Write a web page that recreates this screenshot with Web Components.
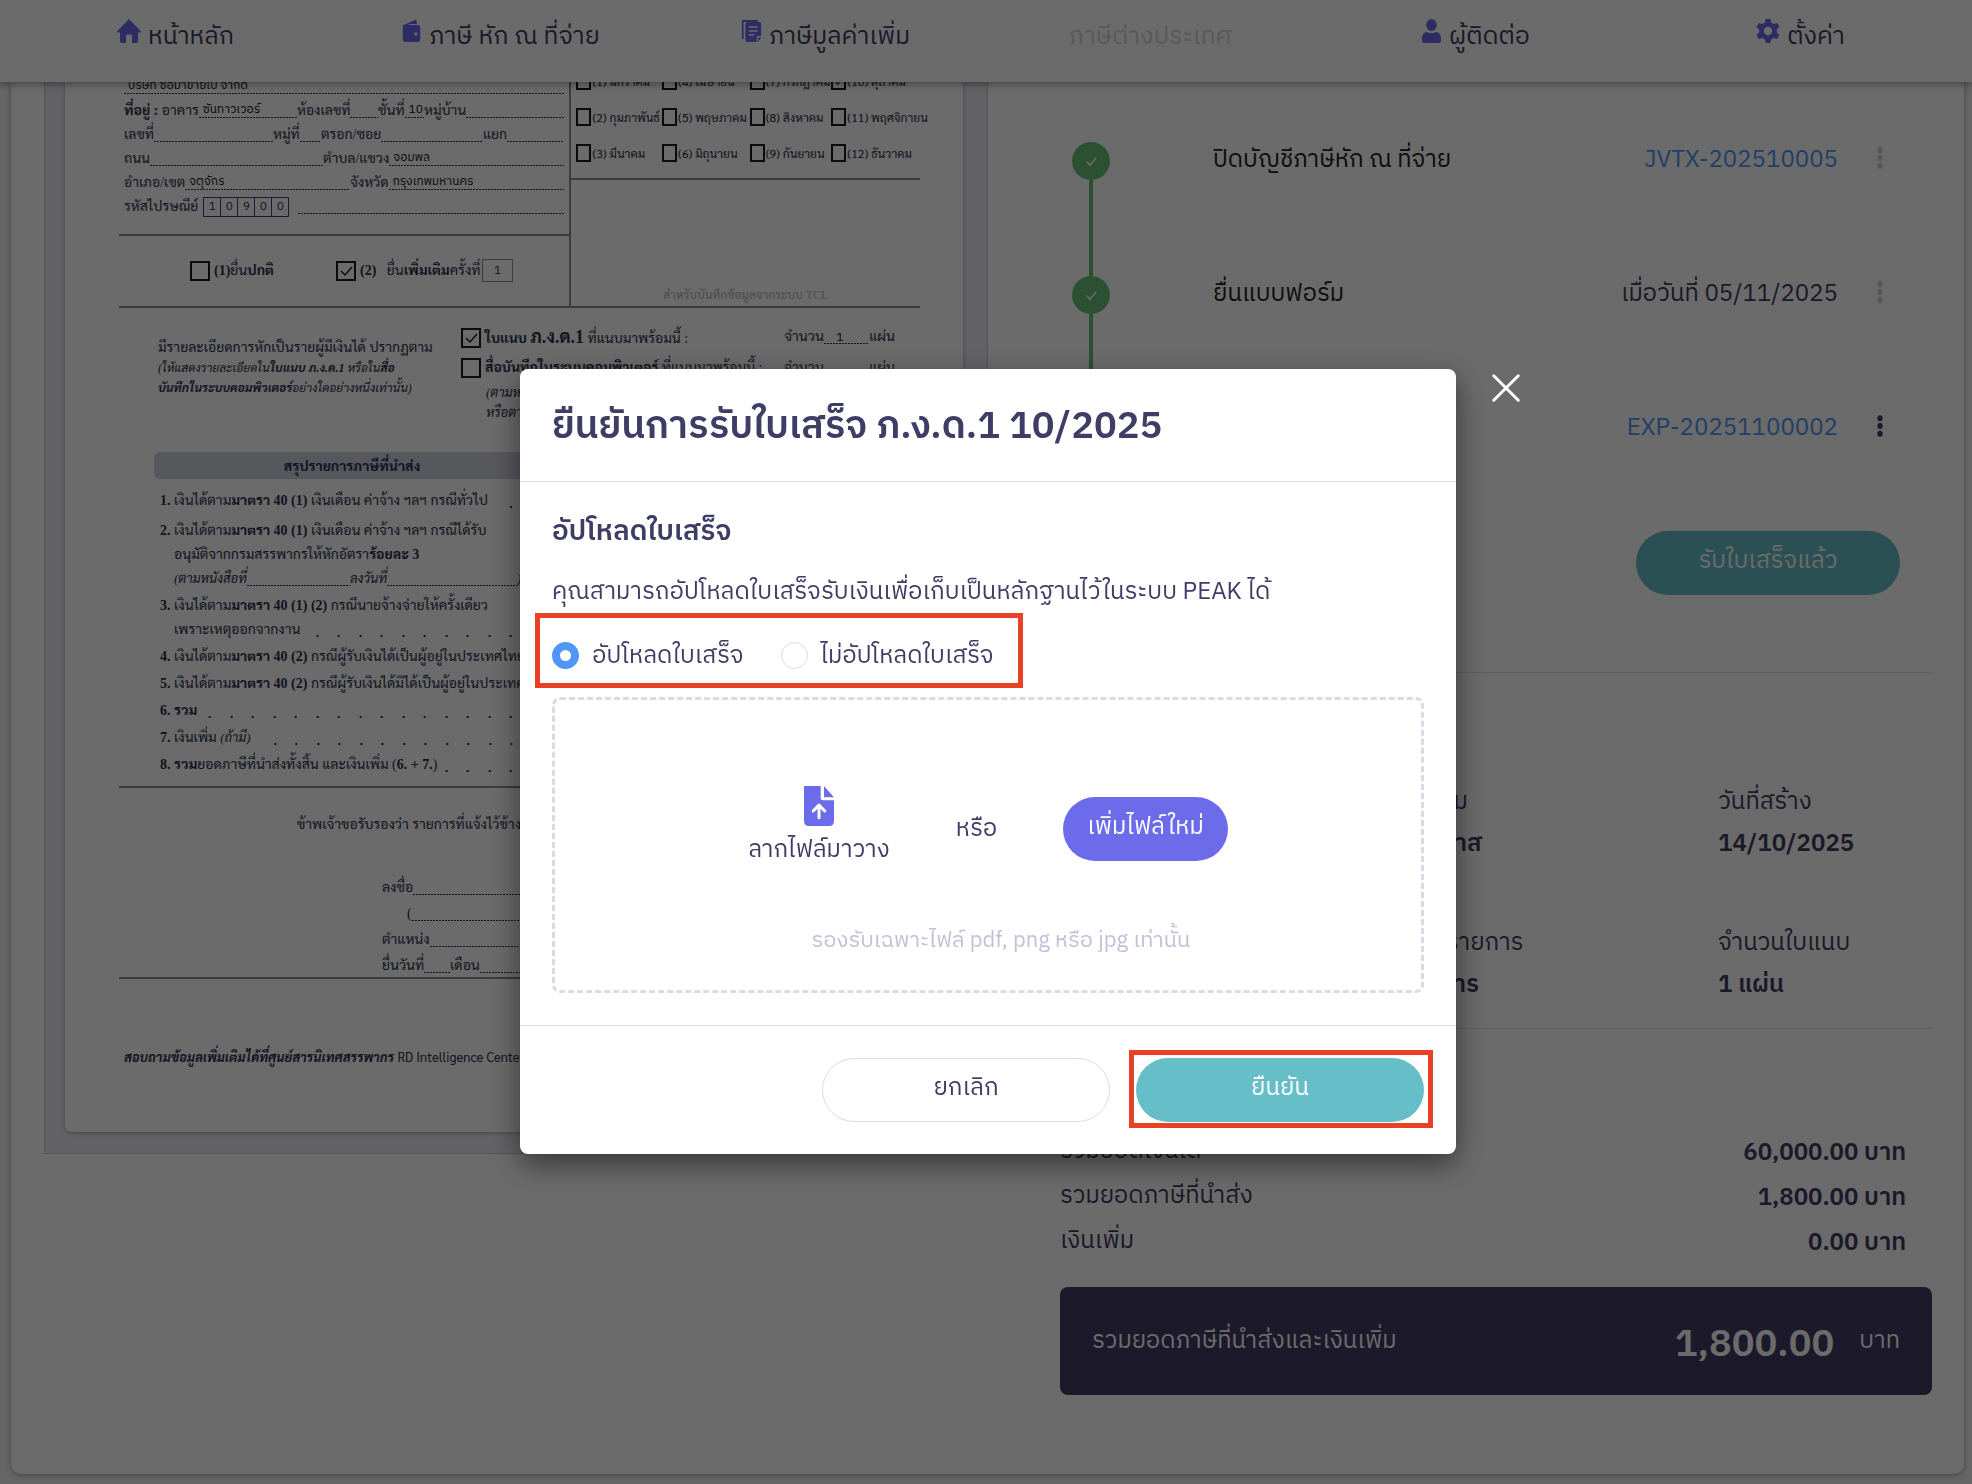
<!DOCTYPE html>
<html lang="th">
<head>
<meta charset="utf-8">
<title>ภ.ง.ด.1</title>
<style>
  body {
    margin: 0;
    min-height: 100vh;
    background: #f1f1f1;
    color: #403c64;
    font: 24px/40px "IBM Plex Sans Thai", "Noto Sans Thai", "Noto Sans", sans-serif;
  }
</style>
</head>
<body>
<tax-page></tax-page>

<script>
/**
 * html is a template tag used to construct a <template>.
 * @param {TemplateStringsArray} htmlString
 */
function html(htmlString) {
  const template = document.createElement("template");
  template.innerHTML = String.raw(htmlString);
  return template;
}

function define(name, template, setup) {
  customElements.define(name, class extends HTMLElement {
    constructor() {
      super();
      this.attachShadow({ mode: "open" }).appendChild(template.content.cloneNode(true));
    }
    connectedCallback() {
      if (setup) setup(this, this.shadowRoot);
    }
  });
}

const icons = {
  home: '<path fill="currentColor" d="M12 0 24 12.5q.6 1-.6 1H21V22q0 2-2 2h-4v-7.5q0-1-1-1h-4q-1 0-1 1V24H5q-2 0-2-2v-8.5H.6q-1.2 0-.6-1Z"/>',
  wallet: '<path fill="currentColor" d="M3 6 16 1q2-.6 2 1.5V5h-7L8 6h11q3 0 3 3v11q0 3-3 3H5q-3 0-3-3V8q0-1.5 1-2Z"/><circle cx="17" cy="15" r="1.8" fill="#fff"/>',
  docs: '<path fill="none" stroke="currentColor" stroke-width="2" d="M2 20V2h17"/><path fill="currentColor" d="M7 3h14q2 0 2 2v12h-5v6H7q-2 0-2-2V5q0-2 2-2Zm12.5 15.5H23L19.5 23Z"/><path stroke="#fff" stroke-width="1.5" d="M9 8h10M9 12h10M9 16h6"/>',
  user: '<circle cx="12" cy="6" r="6" fill="currentColor"/><path fill="currentColor" d="M1 21q0-8 6-8 5 2.5 10 0 6 0 6 8 0 3-3 3H4q-3 0-3-3Z"/>',
  gear: '<path fill="currentColor" fill-rule="evenodd" d="M9.7 0h4.6l.8 3.6 2.6 1.5 3.5-1.2 2.3 4-2.7 2.5v3.2l2.7 2.5-2.3 4-3.5-1.2-2.6 1.5-.8 3.6H9.7l-.8-3.6-2.6-1.5-3.5 1.2-2.300-4 2.7-2.5v-3.2L.5 7.9l2.3-4 3.5 1.2 2.6-1.5ZM12 7.8a4.2 4.2 0 1 0 0 8.4 4.2 4.2 0 0 0 0-8.4Z"/>',
  upload: '<path fill="currentColor" d="M3 0h10v7q0 1.5 1.5 1.5H21V21q0 3-3 3H6q-3 0-3-3Z"/><path fill="currentColor" d="m15 0 6 6.8h-6Z"/><path fill="none" stroke="#fff" stroke-width="1.8" stroke-linecap="round" stroke-linejoin="round" d="M12 19v-7m-3.5 3 3.5-3.5 3.5 3.5"/>',
  check: '<path fill="none" stroke="currentColor" stroke-width="3" stroke-linecap="round" stroke-linejoin="round" d="m4 13 5 6L20 6"/>',
  close: '<path fill="none" stroke="currentColor" stroke-width="2.5" stroke-linecap="round" d="m1.5 1.5 21 21m0-21-21 21"/>',
  more: '<circle cx="12" cy="3.5" r="3.2"/><circle cx="12" cy="12" r="3.2"/><circle cx="12" cy="20.5" r="3.2"/>',
};

define("ui-icon", html`
  <style>
    :host { display: inline-block; width: 24px; height: 24px; flex: none; }
    svg { display: block; width: 100%; height: 100%; fill: currentColor; }
  </style>
  <svg viewBox="0 0 24 24" preserveAspectRatio="none" aria-hidden="true"></svg>
`, (el, root) => {
  root.querySelector("svg").innerHTML = icons[el.getAttribute("name")];
});

define("nav-item", html`
  <style>
    :host { display: flex; justify-content: center; }
    a { display: flex; gap: 7px; color: #403c64; font-size: 25px; text-decoration: none; white-space: nowrap; }
    ui-icon { color: #6c6ceb; margin-top: 2px; }
    :host([small]) ui-icon { width: 21px; }
    :host([disabled]) a { color: #d5d5d9; }
  </style>
  <a href="#"><slot></slot></a>
`, (el, root) => {
  const name = el.getAttribute("icon");
  if (!name) return;
  const icon = document.createElement("ui-icon");
  icon.setAttribute("name", name);
  root.querySelector("a").prepend(icon);
});

define("top-nav", html`
  <style>
    :host { display: block; position: sticky; top: 0; z-index: 2; background: #fff; box-shadow: 0 2px 8px rgba(0, 0, 0, .4); }
    nav { display: grid; grid-template-columns: repeat(6, 1fr); height: 82px; padding: 17px 9px 0 13px; box-sizing: border-box; }
  </style>
  <nav><slot></slot></nav>
`);

/* A label followed by a dotted blank that may hold a value. */
define("form-field", html`
  <style>
    :host { display: flex; align-items: baseline; white-space: nowrap; flex: none; }
    :host([fill]) { flex: 1; }
    .blank {
      flex: 1;
      align-self: stretch;
      min-width: 0;
      background: repeating-linear-gradient(90deg, #2b3350 0 2px, transparent 2px 3px) 0 calc(100% - 5px) / 100% 1px no-repeat;
    }
    .value { display: block; padding-left: 4px; color: #111; font: normal 12px/22px "IBM Plex Sans Thai", "Noto Sans Thai", "Noto Sans", sans-serif; }
  </style>
  <slot></slot>
  <span class="blank"><span class="value"></span></span>
`, (el, root) => {
  if (el.hasAttribute("width")) el.style.width = el.getAttribute("width") + "px";
  root.querySelector(".value").textContent = el.getAttribute("value") || "";
});

define("form-check", html`
  <style>
    :host { display: block; }
    label { display: flex; align-items: center; gap: var(--check-gap, 4px); white-space: nowrap; }
    input {
      appearance: none;
      flex: none;
      width: var(--check-width, 20px);
      height: var(--check-height, 20px);
      margin: 0;
      border: 2px solid #1c1c1c;
    }
    input:checked { background: url("data:image/svg+xml,%3Csvg xmlns='http://www.w3.org/2000/svg' viewBox='0 0 16 16'%3E%3Cpath d='m3 8 4 4 7-8' fill='none' stroke='%23222' stroke-width='1.5'/%3E%3C/svg%3E") center / contain no-repeat; }
  </style>
  <label><input type="checkbox"><span><slot></slot></span></label>
`, (el, root) => {
  root.querySelector("input").checked = el.hasAttribute("checked");
});

define("tax-form", html`
  <style>
    :host {
      display: block;
      box-sizing: border-box;
      padding: 0 24px 21px 20px;
      background: #ebebf1;
      border: 1px solid #cacad0;
      border-top: 0;
      color: #2b3350;
      font: 14px/24px "Liberation Serif", Sarabun, "Noto Serif Thai", serif;
    }
    .paper { background: #fff; border-radius: 0 0 6px 6px; box-shadow: 0 1px 4px rgba(0, 0, 0, .3); padding: 0 43px 0 54px; overflow: hidden; height: 1050px; }
    .top { display: grid; grid-template-columns: minmax(0, 453fr) minmax(0, 349fr); margin-top: -19px; height: 243px; border-bottom: 2px solid #8c8f99; }
    .row { display: flex; height: 24px; padding-left: 5px; }
    .address { padding: 12px 5px 15px 0; }
    .left { border-right: 2px solid #8c8f99; }
    .zip { display: flex; margin: 2px 9px 0 5px; border: 1px solid #3a4380; height: 18px; font: 12px/18px "IBM Plex Sans Thai", "Noto Sans", sans-serif; }
    .zip span { width: 16px; text-align: center; border-left: 1px solid #3a4380; }
    .zip span:first-child { border-left: 0; }
    .kind { display: flex; align-items: center; height: 69px; padding-left: 71px; border-top: 2px solid #8c8f99; }
    .kind form-check { width: 146px; }
    .count { width: 29px; height: 21px; border: 1px solid #8c90b0; text-align: center; font: 12px/21px "IBM Plex Sans Thai", "Noto Sans", sans-serif; }
    .months { display: grid; grid-template-columns: minmax(0, 86fr) minmax(0, 88fr) minmax(0, 82fr) minmax(0, 89fr); grid-auto-rows: 36px; padding: 0 0 7px 5px; border-bottom: 2px solid #8c8f99; font: 12px/24px Sarabun, "Liberation Sans", sans-serif; align-items: center; --check-width: 15px; --check-height: 18px; --check-gap: 1px; }
    .tcl { padding-top: 103px; text-align: center; color: #b4b4b8; font-size: 12px; }
    .attach { display: grid; grid-template-columns: minmax(0, 342fr) minmax(0, 459fr); height: 144px; }
    .attach .note { padding: 30px 0 0 39px; line-height: 20px; }
    .attach .note i { font-size: 12px; }
    .attach .media { padding-top: 15px; line-height: 20px; }
    .media .line { display: flex; height: 30px; justify-content: space-between; align-items: center; padding-right: 25px; }
    .media .line > span { display: flex; }
    .media .more { padding-left: 25px; }
    .note, .line { white-space: nowrap; }
    i { font-size: 13px; }
    big { font-size: 18px; }
    .bar { display: grid; grid-template-columns: 396px 1fr; margin: 0 24px 10px 35px; height: 27px; line-height: 30px; border-radius: 6px; background: #d0d0e0; font-weight: bold; text-align: center; }
    ol { list-style: none; margin: 0; padding: 0 24px 9px 41px; display: grid; gap: 3px; border-bottom: 2px solid #8c8f99; }
    li { display: grid; grid-template-columns: 14px 391px; white-space: nowrap; }
    li:first-child { margin-bottom: 3px; }
    li > div { display: grid; }
    .book { display: flex; }
    .lead { display: flex; gap: 6px; }
    .lead::after {
      content: "";
      flex: 1;
      background: radial-gradient(circle at 11px 18px, #2b3350 1px, transparent 1px), radial-gradient(circle at 32px 18px, #2b3350 1px, transparent 1px);
      background-size: 43px 24px;
      background-position: right top;
    }
    .sign { box-sizing: border-box; padding: 25px 0 0 178px; height: 191px; border-bottom: 2px solid #8c8f99; }
    .sign p { margin: 0 0 39px; }
    .sign .fields { display: grid; gap: 2px; padding-left: 85px; }
    .sign .fields div { display: flex; }
    .sign .fields .name { padding-left: 25px; }
    .help { padding: 66px 0 0 5px; white-space: nowrap; }
    .help span { font: 13px/24px Sarabun, "Noto Sans", sans-serif; }
  </style>
  <div class="paper">
    <div class="top">
      <div class="left">
        <div class="address">
          <div class="row"><form-field fill value="บริษัท ซื้อมาขายไป จำกัด"></form-field></div>
          <div class="row"><form-field width="173" value="ซันทาวเวอร์"><span><b>ที่อยู่ :</b> อาคาร</span></form-field><form-field width="81">ห้องเลขที่</form-field><form-field width="46" value="10">ชั้นที่</form-field><form-field fill>หมู่บ้าน</form-field></div>
          <div class="row"><form-field width="149">เลขที่</form-field><form-field width="48">หมู่ที่</form-field><form-field width="162">ตรอก/ซอย</form-field><form-field fill>แยก</form-field></div>
          <div class="row"><form-field width="199">ถนน</form-field><form-field fill value="จอมพล">ตำบล/แขวง</form-field></div>
          <div class="row"><form-field width="226" value="จตุจักร">อำเภอ/เขต</form-field><form-field fill value="กรุงเทพมหานคร">จังหวัด</form-field></div>
          <div class="row">รหัสไปรษณีย์<div class="zip"><span>1</span><span>0</span><span>9</span><span>0</span><span>0</span></div><form-field fill></form-field></div>
        </div>
        <div class="kind">
          <form-check><b>(1)</b>ยื่น<b>ปกติ</b></form-check>
          <form-check checked><b>(2)</b> &nbsp; ยื่น<b>เพิ่มเติม</b>ครั้งที่</form-check>
          <span class="count">1</span>
        </div>
      </div>
      <div>
        <div class="months">
          <form-check>(1) มกราคม</form-check><form-check>(4) เมษายน</form-check><form-check>(7) กรกฎาคม</form-check><form-check checked>(10) ตุลาคม</form-check>
          <form-check>(2) กุมภาพันธ์</form-check><form-check>(5) พฤษภาคม</form-check><form-check>(8) สิงหาคม</form-check><form-check>(11) พฤศจิกายน</form-check>
          <form-check>(3) มีนาคม</form-check><form-check>(6) มิถุนายน</form-check><form-check>(9) กันยายน</form-check><form-check>(12) ธันวาคม</form-check>
        </div>
        <div class="tcl">สำหรับบันทึกข้อมูลจากระบบ TCL</div>
      </div>
    </div>
    <div class="attach">
      <div class="note">มีรายละเอียดการหักเป็นรายผู้มีเงินได้ ปรากฏตาม<br><i>(ให้แสดงรายละเอียดใน<b>ใบแนบ ภ.ง.ด.1</b> หรือใน<b>สื่อ</b></i><br><i><b>บันทึกในระบบคอมพิวเตอร์</b>อย่างใดอย่างหนึ่งเท่านั้น)</i></div>
      <div class="media">
        <div class="line"><form-check checked><b>ใบแนบ <big>ภ.ง.ด.1</big></b> ที่แนบมาพร้อมนี้ :</form-check><span><form-field width="85" value="&nbsp;&nbsp; 1">จำนวน</form-field>แผ่น</span></div>
        <div class="line"><form-check><b>สื่อบันทึกในระบบคอมพิวเตอร์</b> ที่แนบมาพร้อมนี้ :</form-check><span><form-field width="85">จำนวน</form-field>แผ่น</span></div>
        <div class="more"><i>(ตามหนังสือ<br>หรือตาม</i></div>
      </div>
    </div>
    <div class="bar"><span>สรุปรายการภาษีที่นำส่ง</span></div>
    <ol>
      <li><b>1.</b><div><span class="lead"><span>เงินได้ตาม<b>มาตรา 40 (1)</b> เงินเดือน ค่าจ้าง ฯลฯ กรณีทั่วไป</span></span></div></li>
      <li><b>2.</b><div><span>เงินได้ตาม<b>มาตรา 40 (1)</b> เงินเดือน ค่าจ้าง ฯลฯ กรณีได้รับ</span><span>อนุมัติจากกรมสรรพากรให้หักอัตรา<b>ร้อยละ 3</b></span><i class="book"><form-field width="176">(ตามหนังสือที่</form-field><form-field width="167">ลงวันที่</form-field>)</i></div></li>
      <li><b>3.</b><div><span>เงินได้ตาม<b>มาตรา 40 (1) (2)</b> กรณีนายจ้างจ่ายให้ครั้งเดียว</span><span class="lead">เพราะเหตุออกจากงาน</span></div></li>
      <li><b>4.</b><div><span>เงินได้ตาม<b>มาตรา 40 (2)</b> กรณีผู้รับเงินได้เป็นผู้อยู่ในประเทศไทย</span></div></li>
      <li><b>5.</b><div><span>เงินได้ตาม<b>มาตรา 40 (2)</b> กรณีผู้รับเงินได้มิได้เป็นผู้อยู่ในประเทศไทย</span></div></li>
      <li><b>6.</b><div><span class="lead"><b>รวม</b></span></div></li>
      <li><b>7.</b><div><span class="lead"><span>เงินเพิ่ม <i>(ถ้ามี)</i></span></span></div></li>
      <li><b>8.</b><div><span class="lead"><span><b>รวม</b>ยอดภาษีที่นำส่งทั้งสิ้น และเงินเพิ่ม (<b>6. + 7.</b>)</span></span></div></li>
    </ol>
    <div class="sign">
      <p>ข้าพเจ้าขอรับรองว่า รายการที่แจ้งไว้ข้างต้น</p>
      <div class="fields">
        <div><form-field width="220">ลงชื่อ</form-field></div>
        <div class="name"><form-field width="195">(</form-field></div>
        <div><form-field width="220">ตำแหน่ง</form-field></div>
        <div><form-field width="68">ยื่นวันที่</form-field><form-field width="152">เดือน</form-field></div>
      </div>
    </div>
    <div class="help"><i><b>สอบถามข้อมูลเพิ่มเติมได้ที่ศูนย์สารนิเทศสรรพากร</b></i> <span>RD Intelligence Center</span> <i><b>โทร</b></i></div>
  </div>
`);

define("status-step", html`
  <style>
    :host { display: grid; grid-template-columns: 38px 1fr auto 62px; height: 134px; padding: 0 32px 0 12px; align-items: center; }
    .track { display: flex; flex-direction: column; align-items: center; height: 100%; color: #69c077; }
    .track::before, .track::after { content: ""; flex: 1; width: 4px; background: currentColor; }
    :host([first]) .track::before, :host([last]) .track::after { background: none; }
    .dot { display: grid; place-items: center; width: 38px; height: 38px; border-radius: 50%; background: currentColor; }
    .dot ui-icon { width: 13px; height: 13px; color: #fff; }
    .label { padding-left: 103px; color: #222; }
    .label, .state { padding-bottom: 2px; }
    ::slotted(a) { color: #4f96f6; text-decoration: none; }
    button { display: grid; place-items: center; padding: 0 0 6px; margin-left: 22px; width: 40px; height: 40px; border: 0; background: none; color: #d0d0d4; }
    button ui-icon { width: 20px; height: 22px; }
    :host([last]) button { color: #403c64; }
  </style>
  <div class="track"><span class="dot"><ui-icon name="check"></ui-icon></span></div>
  <span class="label"><slot name="label"></slot></span>
  <span class="state"><slot></slot></span>
  <button type="button" aria-label="เมนู"><ui-icon name="more"></ui-icon></button>
`);

define("pill-button", html`
  <style>
    :host { display: block; }
    button {
      display: block;
      width: 100%;
      height: 64px;
      padding: 0 23px 4px;
      border: 1px solid transparent;
      border-radius: 32px;
      background: #66bec9;
      color: #fff;
      font: inherit;
      white-space: nowrap;
    }
    :host([tone="outline"]) button { background: #fff; border-color: #dcdae6; color: #403c64; }
    :host([tone="violet"]) button { background: #6c6ceb; }
  </style>
  <button type="button"><slot></slot></button>
`);

define("info-cell", html`
  <style>
    :host { display: block; white-space: nowrap; }
    dl, dd, dt { margin: 0; }
    dd { padding-top: 2px; font-weight: 600; }
  </style>
  <dl><dt><slot name="label"></slot></dt><dd><slot></slot></dd></dl>
`);

define("amount-row", html`
  <style>
    :host { display: flex; justify-content: space-between; height: 45px; padding-right: 26px; }
    strong { font-weight: 600; padding-top: 2px; }
  </style>
  <span><slot name="label"></slot></span><strong><slot></slot></strong>
`);

define("grand-total", html`
  <style>
    :host { display: flex; align-items: center; height: 108px; padding: 0 32px; border-radius: 8px; background: #403c64; color: #fff; }
    span { flex: 1; }
    strong { padding-top: 8px; font-size: 38px; font-weight: 600; margin-right: 25px; }
  </style>
  <span><slot name="label"></slot></span><strong><slot></slot></strong>บาท
`);

define("receipt-dialog", html`
  <style>
    :host { position: fixed; inset: 0; z-index: 10; display: grid; place-items: center; padding: 38px 0 0 4px; background: rgba(0, 0, 0, .58); }
    .dialog { position: relative; width: min(936px, 80%); background: #fff; border-radius: 8px; box-shadow: 0 10px 30px rgba(0, 0, 0, .5); color: #3d3d66; }
    h2, h3, p { margin: 0; }
    h2 { padding: 30px 32px 26px; border-bottom: 1px solid #dcdae6; font-size: 38px; line-height: 56px; font-weight: 600; }
    .body { padding: 30px 32px 32px; }
    h3 { font-size: 28px; font-weight: 600; }
    .intro { margin: 20px 0 24px; white-space: nowrap; }
    .mark { position: relative; }
    .mark::after { content: ""; position: absolute; border: 5px solid #ea4025; pointer-events: none; }
    .choices { display: inline-flex; gap: 37px; vertical-align: top; white-space: nowrap; }
    .choices::after { inset: -23px -29px -12px -17px; }
    .choices label { display: flex; align-items: center; gap: 13px; }
    input { appearance: none; width: 27px; height: 27px; margin: 0; border: 1px solid #dcdae6; border-radius: 50%; }
    input:checked { border: 8px solid #4f96f6; }
    .drop { display: grid; justify-items: center; align-content: start; box-sizing: border-box; height: 296px; margin-top: 21px; padding-top: 86px; border: 3px dashed #dcdae6; border-radius: 8px; }
    .pick { display: flex; align-items: center; gap: 66px; }
    .drag { display: grid; justify-items: center; gap: 3px; height: 86px; }
    .drag ui-icon { width: 40px; height: 40px; color: #6c6ceb; }
    .hint { margin-top: 49px; padding-left: 26px; font-size: 22px; color: #c3c0d6; }
    footer { display: flex; justify-content: flex-end; gap: 26px; padding: 32px; border-top: 1px solid #dcdae6; }
    footer pill-button { width: 288px; }
    .confirm::after { inset: -8px -9px -6px -7px; }
    .close { position: absolute; left: 100%; top: 0; margin-left: 30px; padding: 5px 6px; border: 0; background: none; color: #fff; }
    .close ui-icon { display: block; width: 28px; height: 28px; }
  </style>
  <section class="dialog" role="dialog" aria-modal="true" aria-labelledby="title">
    <h2 id="title"><slot name="title"></slot></h2>
    <div class="body">
      <h3>อัปโหลดใบเสร็จ</h3>
      <p class="intro">คุณสามารถอัปโหลดใบเสร็จรับเงินเพื่อเก็บเป็นหลักฐานไว้ในระบบ PEAK ได้</p>
      <div class="choices mark" role="radiogroup">
        <label><input type="radio" name="receipt" checked>อัปโหลดใบเสร็จ</label>
        <label><input type="radio" name="receipt">ไม่อัปโหลดใบเสร็จ</label>
      </div>
      <div class="drop">
        <div class="pick">
          <div class="drag"><ui-icon name="upload"></ui-icon><span>ลากไฟล์มาวาง</span></div>
          <span>หรือ</span>
          <pill-button tone="violet">เพิ่มไฟล์ใหม่</pill-button>
        </div>
        <p class="hint">รองรับเฉพาะไฟล์ pdf, png หรือ jpg เท่านั้น</p>
      </div>
    </div>
    <footer>
      <pill-button tone="outline">ยกเลิก</pill-button>
      <pill-button class="confirm mark">ยืนยัน</pill-button>
    </footer>
    <button class="close" type="button" aria-label="ปิด"><ui-icon name="close"></ui-icon></button>
  </section>
`);

define("tax-page", html`
  <style>
    :host { display: block; }
    main { display: grid; grid-template-columns: minmax(0, 944fr) minmax(0, 872fr); gap: 72px; align-items: start; margin: 0 8px 9px 11px; padding: 0 32px 79px 33px; background: #fff; border-radius: 0 0 10px 10px; box-shadow: 0 1px 5px rgba(0, 0, 0, .35); }
    .steps { padding: 12px 0 77px; border-bottom: 1px solid #dedede; }
    .steps pill-button { width: 264px; margin: 35px 32px 0 auto; }
    .info { display: grid; grid-template-columns: 319fr 339fr 214fr; row-gap: 59px; padding: 109px 0 23px; border-bottom: 1px solid #dedede; }
    .sums { padding: 102px 0 21px; }
  </style>
  <top-nav>
    <nav-item icon="home">หน้าหลัก</nav-item>
    <nav-item icon="wallet" small>ภาษี หัก ณ ที่จ่าย</nav-item>
    <nav-item icon="docs" small>ภาษีมูลค่าเพิ่ม</nav-item>
    <nav-item disabled>ภาษีต่างประเทศ</nav-item>
    <nav-item icon="user" small>ผู้ติดต่อ</nav-item>
    <nav-item icon="gear">ตั้งค่า</nav-item>
  </top-nav>
  <main>
    <tax-form></tax-form>
    <section>
      <div class="steps">
        <status-step first><span slot="label">ปิดบัญชีภาษีหัก ณ ที่จ่าย</span><a href="#">JVTX-202510005</a></status-step>
        <status-step><span slot="label">ยื่นแบบฟอร์ม</span>เมื่อวันที่ 05/11/2025</status-step>
        <status-step last><span slot="label">ชำระภาษี</span><a href="#">EXP-20251100002</a></status-step>
        <pill-button>รับใบเสร็จแล้ว</pill-button>
      </div>
      <div class="info">
        <info-cell><span slot="label">แบบฟอร์ม</span>ภ.ง.ด.1</info-cell>
        <info-cell><span slot="label">ผู้ติดตาม</span>คุณโอภาส</info-cell>
        <info-cell><span slot="label">วันที่สร้าง</span>14/10/2025</info-cell>
        <info-cell><span slot="label">งวดภาษี</span>10/2025</info-cell>
        <info-cell><span slot="label">จำนวนรายการ</span>1 รายการ</info-cell>
        <info-cell><span slot="label">จำนวนใบแนบ</span>1 แผ่น</info-cell>
      </div>
      <div class="sums">
        <amount-row><span slot="label">รวมยอดเงินได้</span>60,000.00 บาท</amount-row>
        <amount-row><span slot="label">รวมยอดภาษีที่นำส่ง</span>1,800.00 บาท</amount-row>
        <amount-row><span slot="label">เงินเพิ่ม</span>0.00 บาท</amount-row>
      </div>
      <grand-total><span slot="label">รวมยอดภาษีที่นำส่งและเงินเพิ่ม</span>1,800.00</grand-total>
    </section>
  </main>
  <receipt-dialog><span slot="title">ยืนยันการรับใบเสร็จ ภ.ง.ด.1 10/2025</span></receipt-dialog>
`);
</script>
</body>
</html>
